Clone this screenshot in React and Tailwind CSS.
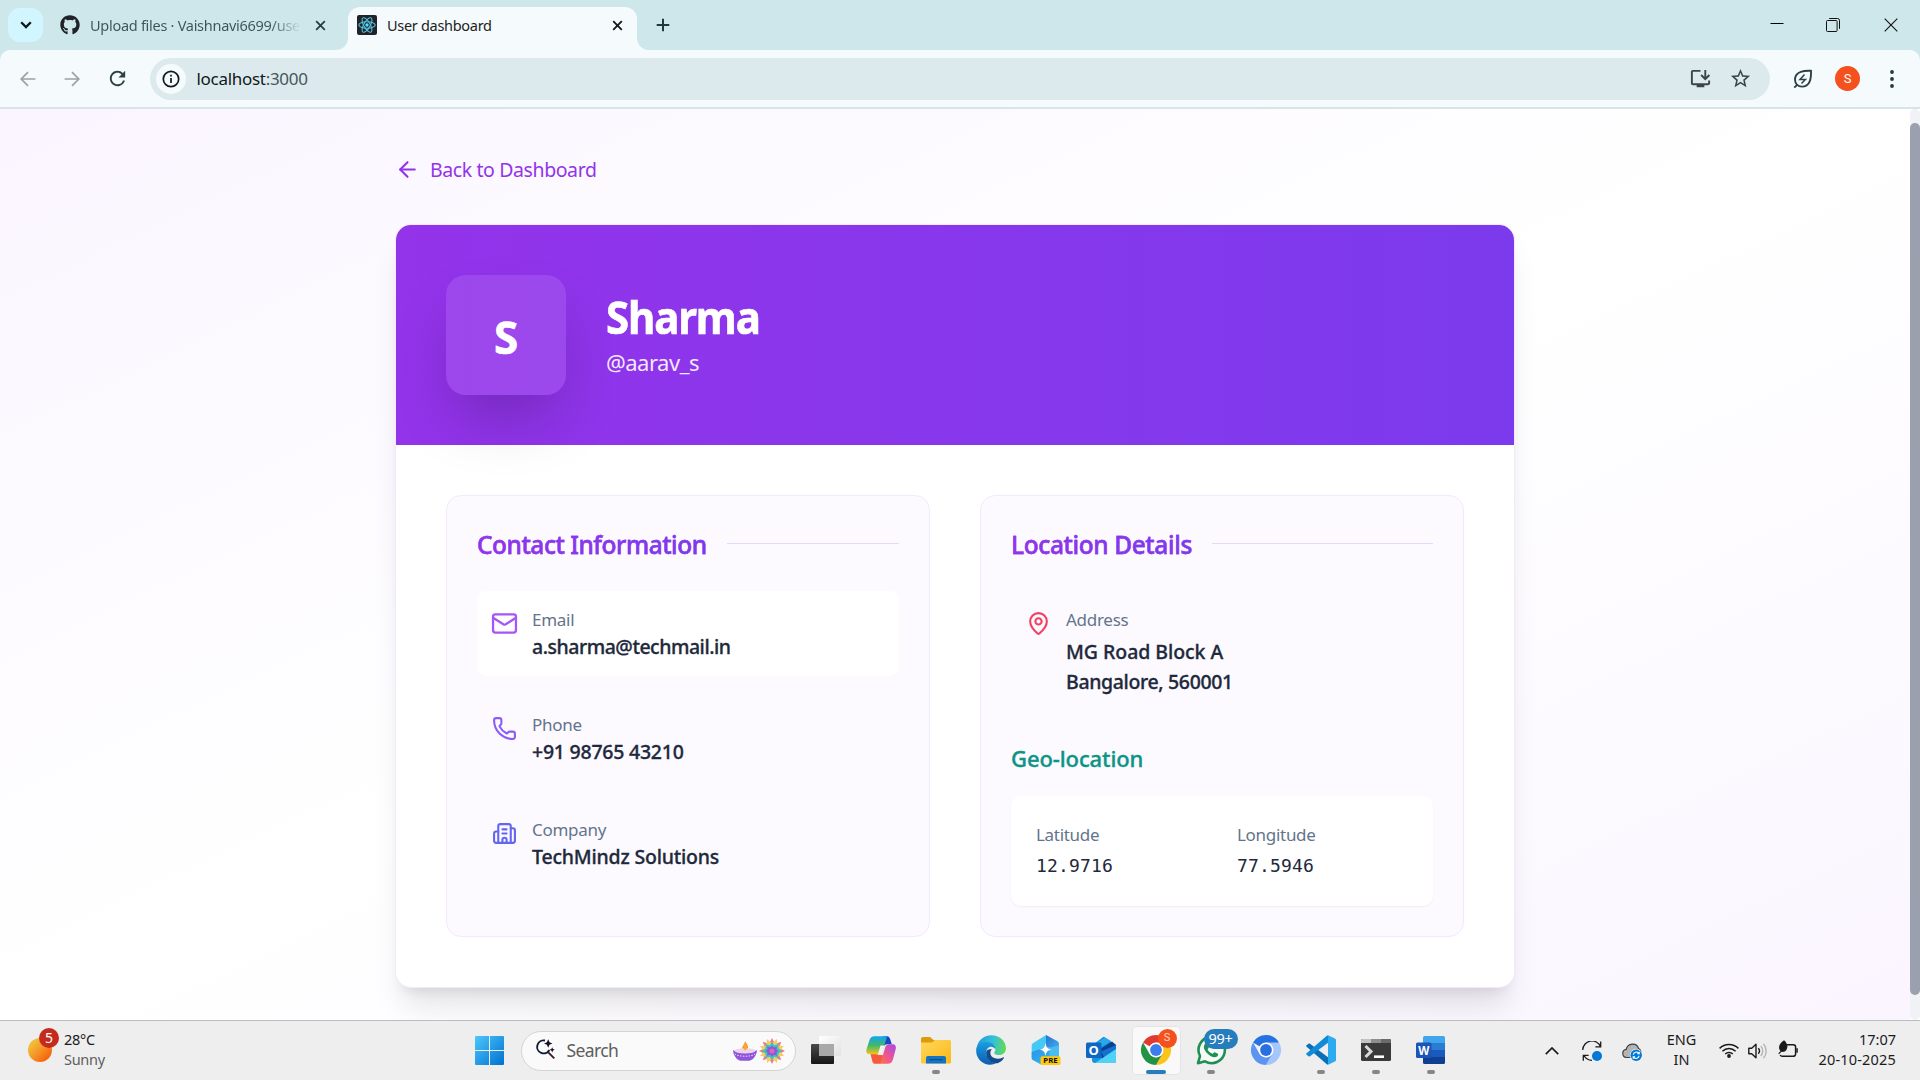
import React from "react";
import { ArrowLeft, Mail, Phone, MapPin } from "lucide-react";
import { FaGithub } from "react-icons/fa";
import { MdOutlineStarBorder, MdOutlineInstallDesktop, MdRefresh } from "react-icons/md";

/* ---------- browser chrome ---------- */

function CloseX({ className }) {
  return (
    <svg viewBox="0 0 12 12" className={className} fill="none" stroke="currentColor" strokeWidth="2">
      <path d="M1.3 1.3 10.7 10.7M10.7 1.3 1.3 10.7" />
    </svg>
  );
}

function ReactLogo() {
  return (
    <svg viewBox="0 0 20 20" className="size-5 shrink-0">
      <rect width="20" height="20" rx="2" fill="#20232a" />
      <g fill="none" stroke="#53c1de" strokeWidth="1.1">
        <ellipse cx="10" cy="10" rx="8.2" ry="3.2" />
        <ellipse cx="10" cy="10" rx="8.2" ry="3.2" transform="rotate(60 10 10)" />
        <ellipse cx="10" cy="10" rx="8.2" ry="3.2" transform="rotate(120 10 10)" />
      </g>
      <circle cx="10" cy="10" r="1.7" fill="#61dafb" />
    </svg>
  );
}

function TabStrip() {
  return (
    <div className="flex h-[50px] bg-[#cee7eb] text-[14.5px]">
      <div className="ml-2 mt-2 flex h-[34px] w-[35px] items-center justify-center rounded-[12px] bg-[#d1f6ff]">
        <svg viewBox="0 0 12 8" className="h-2 w-3" fill="none" stroke="#10191b" strokeWidth="2.3">
          <path d="M1.2 1.3 6 6.1l4.8-4.8" />
        </svg>
      </div>
      <div className="ml-[17px] flex w-[276px] items-center">
        <FaGithub className="size-5 shrink-0 text-[#1f2328]" />
        <div className="ml-2.5 w-[211px] shrink-0 overflow-hidden pt-px whitespace-nowrap bg-linear-to-r from-[#3d5357] from-85% to-[#cee7eb] bg-clip-text tracking-[-0.28px] text-transparent">
          Upload files · Vaishnavi6699/use
        </div>
        <CloseX className="ml-[13.500px] size-[11px] shrink-0 text-[#2b3f43]" />
      </div>
      <div className="flex w-3 items-end bg-[#f5fafc]">
        <div className="h-full w-full rounded-br-[12px] bg-[#cee7eb]" />
      </div>
      <div className="mt-[7px] flex w-[289px] items-center rounded-t-[12px] bg-[#f5fafc] pb-[7px] pl-[9px]">
        <ReactLogo />
        <div className="ml-2.5 w-[224px] pt-px tracking-[-0.3px] text-[#1b2224]">User dashboard</div>
        <CloseX className="ml-px size-[11px] text-[#10191b]" />
      </div>
      <div className="flex grow bg-[#f5fafc]">
        <div className="flex grow items-center rounded-bl-[12px] bg-[#cee7eb] pl-[19px]">
          <svg viewBox="0 0 14 14" className="size-3.5" stroke="#23393d" strokeWidth="2">
            <path d="M7 .7v12.6M.7 7h12.6" />
          </svg>
          <svg viewBox="0 0 14 14" className="ml-auto size-3.5" fill="none" stroke="#000">
            <path d="M.5 5.5h13" />
          </svg>
          <svg viewBox="0 0 14 14" className="ml-[42px] size-3.5" fill="none" stroke="#111">
            <rect x=".5" y="2.5" width="10.6" height="11" rx="1" />
            <path d="M3.2.5h8.3a2 2 0 0 1 2 2v8.3" />
          </svg>
          <svg viewBox="0 0 14 14" className="ml-[44px] mr-[22px] size-3.5" fill="none" stroke="#111" strokeWidth="1.1">
            <path d="M.7.7l12.6 12.6M13.3.7.7 13.3" />
          </svg>
        </div>
      </div>
    </div>
  );
}

function Toolbar() {
  return (
    <div className="bg-[#cee7eb]">
      <div className="flex h-[59px] items-center rounded-t-[10px] border-b-2 border-[#d9e4e9] bg-[#f5fafc]">
        <svg viewBox="0 0 16 16" className="ml-5 size-4 text-[#9ba3a6]" fill="none" stroke="currentColor" strokeWidth="1.7">
          <path d="M15.4 8H1.6M8 1.2 1.2 8 8 14.8" />
        </svg>
        <svg viewBox="0 0 16 16" className="ml-7 size-4 text-[#9ba3a6]" fill="none" stroke="currentColor" strokeWidth="1.7">
          <path d="M.6 8h13.8M8 1.2 14.8 8 8 14.8" />
        </svg>
        <MdRefresh className="ml-[26px] size-[23px] text-[#2c4146]" />
        <div className="ml-[21px] flex h-[42px] w-[1620px] items-center rounded-full bg-[#dceaee] pl-1.5">
          <div className="flex size-[30px] items-center justify-center rounded-full bg-[#f5fafc]">
            <svg viewBox="0 0 18 18" className="size-[18px]" fill="none" stroke="#10191b" strokeWidth="1.7">
              <circle cx="9" cy="9" r="7.7" />
              <path d="M9 8v5M9 4.800v1.800" />
            </svg>
          </div>
          <div className="ml-[10.500px] pt-px text-[17px] tracking-[-0.3px] text-[#10191b]">
            localhost<span className="text-[#45565a]">:3000</span>
          </div>
          <MdOutlineInstallDesktop className="ml-auto size-[23px] text-[#3d4447]" />
          <MdOutlineStarBorder className="ml-[17px] mr-[18px] size-[23px] text-[#3d4447]" />
        </div>
        <svg viewBox="0 0 20 20" className="ml-[22.500px] size-5" fill="none" stroke="#2c4146" strokeWidth="1.9">
          <path d="M18 1.800C12 1.500 2 2 2 10.600c0 4.200 3 7 7 7 8 0 9.300-8 9-15.800Z" />
          <path d="M1.300 18.600 4.600 15.300" />
          <path d="M11.500 5.500 7 10.500h5.400L8.500 14.500" strokeWidth="1.5" />
        </svg>
        <div className="ml-[22.500px] flex size-[25px] items-center justify-center rounded-full bg-[#f4511e] font-[Roboto] text-[13px] text-white">S</div>
        <svg viewBox="0 0 4 18" className="ml-[30px] h-[18px] w-1" fill="#23393d">
          <circle cx="2" cy="2" r="1.900" />
          <circle cx="2" cy="9" r="1.900" />
          <circle cx="2" cy="16" r="1.900" />
        </svg>
      </div>
    </div>
  );
}

/* ---------- page ---------- */

function BuildingIcon({ className }) {
  return (
    <svg viewBox="0 0 24 24" className={className} fill="none" stroke="currentColor" strokeWidth="2" strokeLinecap="round" strokeLinejoin="round">
      <path d="M10 12h4M10 8h4M14 21v-3a2 2 0 0 0-4 0v3" />
      <path d="M6 10H4a2 2 0 0 0-2 2v7a2 2 0 0 0 2 2h16a2 2 0 0 0 2-2V9a2 2 0 0 0-2-2h-2" />
      <path d="M6 21V5a2 2 0 0 1 2-2h8a2 2 0 0 1 2 2v16" />
    </svg>
  );
}

function Panel({ title, children }) {
  return (
    <section className="w-[484px] rounded-[15px] border border-[#f3e8ff] bg-[#fcfaff] p-[30px]">
      <div className="mb-[30px] flex h-[35px] items-center gap-5">
        {title}
        <div className="h-px grow bg-[#e5d8fd]" />
      </div>
      {children}
    </section>
  );
}

function InfoRow({ icon, label, className, children }) {
  return (
    <div className={"flex gap-[15px] rounded-[10px] p-[15px] " + className}>
      <div className="mt-[5px]">{icon}</div>
      <div className="-mb-px pt-px">
        <div className="text-[17px] leading-[25px] tracking-[-0.28px] text-[#64748b]">{label}</div>
        {children}
      </div>
    </div>
  );
}

const heading =
  "mt-0.5 w-fit whitespace-nowrap bg-linear-to-r from-[#9333ea] to-[#7c3aed] bg-clip-text text-[24.5px] leading-[35px] font-medium text-transparent [-webkit-text-stroke:0.4px_#8837eb]";
const value = "whitespace-nowrap text-[19.5px] leading-[30px] font-medium text-[#1e293b] [-webkit-text-stroke:0.3px_#1e293b]";

function ProfilePage() {
  return (
    <main className="h-[911px] grow overflow-hidden bg-linear-to-br from-[#faf5ff] via-white to-[#faf5ff] pl-[394.500px] pt-[45px]">
      <a className="flex h-[31px] w-fit items-center gap-[10.500px] text-[#9333ea]">
        <ArrowLeft className="size-[25px]" strokeWidth={2} />
        <span className="pt-px text-[19.5px] tracking-[-0.4px]">Back to Dashboard</span>
      </a>
      <article className="mt-10 ml-[1.500px] w-[1118px] rounded-[15px] bg-white shadow-[0_25px_31px_-6px_rgba(0,0,0,0.1),0_10px_12.5px_-7.5px_rgba(0,0,0,0.1)] ring-1 ring-[#f3e8ff]">
        <header className="flex h-[220px] items-center rounded-t-[15px] bg-linear-to-r from-[#9333ea] to-[#7c3aed] pl-[50px] text-white">
          <div className="flex size-[120px] items-center justify-center rounded-[20px] bg-white/10 pt-[3px] text-[44px] font-bold shadow-[0_31px_62px_-15px_rgba(0,0,0,0.25)]">
            <span className="[-webkit-text-stroke:0.6px_white]">S</span>
          </div>
          <div className="ml-10">
            <h1 className="h-[51px] origin-left scale-x-[0.944] pt-px text-[44.5px] leading-[50px] font-bold tracking-[-1.2px] [-webkit-text-stroke:0.6px_white]">Sharma</h1>
            <div className="mt-[3px] h-[35px] text-[22px] leading-[35px] tracking-[-0.5px] text-[#f3e8ff]">@aarav_s</div>
          </div>
        </header>
        <div className="flex gap-[50px] p-[50px]">
          <Panel title={<h2 className={heading + " tracking-[-0.48px]"}>Contact Information</h2>}>
            <div className="flex flex-col gap-5">
              <InfoRow label="Email" className="bg-white" icon={<Mail className="size-[25px] scale-110 text-[#a855f7]" />}>
                <div className={value + " tracking-[-0.48px]"}>a.sharma@techmail.in</div>
              </InfoRow>
              <InfoRow label="Phone" className="" icon={<Phone className="size-[25px] text-[#8b5cf6]" />}>
                <div className={value + " tracking-[-0.24px]"}>+91 98765 43210</div>
              </InfoRow>
              <InfoRow label="Company" className="" icon={<BuildingIcon className="size-[25px] text-[#6366f1]" />}>
                <div className={value + " tracking-[-0.2px]"}>TechMindz Solutions</div>
              </InfoRow>
            </div>
          </Panel>
          <Panel title={<h2 className={heading + " tracking-[-0.4px]"}>Location Details</h2>}>
            <InfoRow label="Address" className="" icon={<MapPin className="size-[25px] text-[#f43f5e]" />}>
              <div className={value + " mt-[5px] tracking-[-0.05px]"}>MG Road Block A</div>
              <div className={value + " tracking-[-0.36px]"}>Bangalore, 560001</div>
            </InfoRow>
            <h3 className="mt-[30px] mb-5 h-[35px] text-[22px] leading-[35px] font-medium tracking-[-0.1px] text-[#0d9488] [-webkit-text-stroke:0.35px_#0d9488]">
              Geo-location
            </h3>
            <div className="grid h-[110px] grid-cols-2 gap-x-[30px] rounded-[10px] bg-white p-[25px] pt-[26px] shadow-[0_1px_2px_rgba(0,0,0,0.05)]">
              {[
                ["Latitude", "12.9716"],
                ["Longitude", "77.5946"],
              ].map(([name, n]) => (
                <div key={name}>
                  <div className="text-[17px] leading-[25px] tracking-[-0.3px] text-[#64748b]">{name}</div>
                  <div className="mt-[5px] font-['DejaVu_Sans_Mono',monospace] text-[18px] leading-[28px] tracking-[0.16px] text-[#1e293b]">{n}</div>
                </div>
              ))}
            </div>
          </Panel>
        </div>
      </article>
    </main>
  );
}

/* ---------- taskbar icons, each on a 30 × 30 grid ---------- */

function Art({ children }) {
  return (
    <svg viewBox="0 0 30 30" className="size-[30px] overflow-visible">
      {children}
    </svg>
  );
}

function Grad({ id, from, to, x2 = 1, y2 = 1 }) {
  return (
    <linearGradient id={id} x1="0" y1="0" x2={x2} y2={y2}>
      <stop offset="0" stopColor={from} />
      <stop offset="1" stopColor={to} />
    </linearGradient>
  );
}

function TaskViewIcon() {
  return (
    <Art>
      <Grad id="tvd" from="#4a4a4a" to="#161616" y2={1} x2={0} />
      <Grad id="tvl" from="#ffffff" to="#e2e2e2" />
      <rect x="0" y="9" width="23" height="20" rx="1" fill="url(#tvd)" />
      <rect x="8" y="1" width="22" height="20" rx="1" fill="url(#tvl)" />
      <rect x="8" y="9" width="15" height="12" fill="#a9a9a9" />
    </Art>
  );
}

function CopilotIcon() {
  return (
    <Art>
      <linearGradient id="cpA" x1="0" y1="0" x2="0" y2="1">
        <stop offset="0" stopColor="#12a5f5" />
        <stop offset=".5" stopColor="#3fb86b" />
        <stop offset="1" stopColor="#f2c51a" />
      </linearGradient>
      <linearGradient id="cpB" x1="0" y1="1" x2="1" y2="0">
        <stop offset="0" stopColor="#ff7a3d" />
        <stop offset=".45" stopColor="#f0568f" />
        <stop offset="1" stopColor="#a348e8" />
      </linearGradient>
      <path d="M17 1.200h4c2 0 2.700 1.500 3.200 3l1.600 5h-4.500c-2 0-3 .8-3.600 2.800Z" fill="#1746c8" />
      <path d="M8.500 28.800h5c2 0 3-1.200 3.600-3.200l1.300-5-9-1.600H4.500l1.700 6.800c.5 2 1.200 3 2.300 3Z" fill="#f55a3c" />
      <path d="M8.500 1.200h10.700c2 0 1.500 1.800 1 3.300l-3.600 11.300c-.8 2.600-2 3.400-4.300 3.400H4c-3 0-4.300-1.800-3.400-5.200L3.500 5c.8-2.500 2.300-3.800 5-3.800Z" fill="url(#cpA)" />
      <path d="M21.500 28.800H12c2-.4 2.800-1.600 3.400-3.400L19 13c.8-2.600 2-3.800 4.300-3.800h3c3 0 4.200 2 3.300 5.300L27 24.300c-.8 3-2.500 4.500-5.500 4.500Z" fill="url(#cpB)" />
      <path d="M14.500 10.500h4l-2.700 9.300h-4Z" fill="#f4f1f5" />
    </Art>
  );
}

function FolderIcon() {
  return (
    <Art>
      <Grad id="fol" from="#ffd75e" to="#fbb914" />
      <path d="M0 4a2 2 0 0 1 2-2h7l3.500 3H29v8H0Z" fill="#dd9a09" />
      <path d="M0 7.500h11L14 5h14.500A1.500 1.500 0 0 1 30 6.500V27a1.500 1.500 0 0 1-1.500 1.500h-27A1.500 1.500 0 0 1 0 27Z" fill="url(#fol)" />
      <path d="M5 28.500V23a2 2 0 0 1 2-2h16a2 2 0 0 1 2 2v5.500Z" fill="#1374c5" />
      <path d="M8.500 24.600h13" stroke="#0b4f8e" strokeWidth="1.200" />
    </Art>
  );
}

function EdgeIcon() {
  return (
    <Art>
      <linearGradient id="edA" x1="0" y1=".4" x2="1" y2=".5">
        <stop offset="0" stopColor="#1f9be0" />
        <stop offset=".55" stopColor="#35c1d8" />
        <stop offset="1" stopColor="#62dc4f" />
      </linearGradient>
      <Grad id="edB" from="#1b9de2" to="#0c5cb0" x2={0} />
      <path d="M1 11C3 4.500 8.500.3 15.300.3 23.600.3 30 6.200 30 13.300c0 4-3.100 6.800-6.900 6.800-2.900 0-4.900-1-4.900-2.200 0-.8 1.200-1.400 1.200-3.600 0-3-3.300-5.600-7.500-5.600Z" fill="url(#edA)" />
      <path d="M.2 14C.8 9.500 5.500 6.800 10.700 7c4.800.2 8.700 3 8.700 7.300-1-1.600-2.500-2.500-4.300-2.500-2.800 0-4.900 2.400-4.900 6 0 6 4.800 10 9.800 10.300-1.500 1-3.500 1.700-5.700 1.700C6 29.800-.7 22.800.2 14Z" fill="url(#edB)" />
      <path d="M10.200 17c-.8 7 5.300 12 11.400 11.200 2.700-1 5-3 6.200-5 .4-.8-.2-1.200-.9-.8-5.500 2.800-12.300.6-12.500-4.200-.1-1.800.7-3 1.600-3.600-2.700-.7-5.500.2-5.800 2.400Z" fill="#124c8c" />
    </Art>
  );
}

function CopilotAppIcon() {
  return (
    <Art>
      <Grad id="m3a" from="#2b8fe4" to="#35c3f3" />
      <Grad id="m3b" from="#2a6fd6" to="#3fb4ee" />
      <path d="M15 0 26.500 6.200A3 3 0 0 1 28 9v6L15 12Z" fill="url(#m3b)" />
      <path d="M1.500 8.500 15 0v12L7 20 .7 23V10.500a2.500 2.500 0 0 1 .8-2Z" fill="#45c9f4" />
      <path d="M.7 17 15 12l13 3v8.500L18 29.500H10L1.700 25a2 2 0 0 1-1-1.800Z" fill="url(#m3a)" />
      <path d="M18 13 28 10.500V23l-9 3Z" fill="#4bbcf0" />
      <path d="M14.500 8c.8 4.600 2 5.800 6.300 6.600-4.300.8-5.500 2-6.300 6.600-.8-4.600-2-5.800-6.300-6.600 4.300-.8 5.500-2 6.300-6.600Z" fill="#fff" />
      <rect x="9.500" y="21.300" width="20" height="8.700" rx="1.800" fill="#ffc90e" />
      <text x="19.500" y="28.300" textAnchor="middle" className="font-['Noto_Sans'] text-[7.800px] font-bold" fill="#111">PRE</text>
    </Art>
  );
}

function OutlookIcon() {
  return (
    <Art>
      <path d="M6 10.500 16.500 2.500c.8-.6 1.700-.6 2.500 0L30 10v16a2 2 0 0 1-2 2H9a3 3 0 0 1-3-3Z" fill="#1493df" />
      <path d="M9 9.500 19 2.400 25 6 12 14Z" fill="#28a8ea" />
      <path d="M14 14 26 6.500l4 3.500v6L16 24Z" fill="#0a3f94" />
      <path d="M15 16.500 30 10v5L18 22Z" fill="#1272cc" />
      <path d="M30 14v12a2 2 0 0 1-2 2H9Z" fill="#50d1f8" />
      <rect x="0" y="7.500" width="15.500" height="15.500" rx="1.500" fill="#0f67c4" />
      <text x="7.700" y="20" textAnchor="middle" className="font-['Noto_Sans'] text-[13px] font-bold" fill="#fff">O</text>
    </Art>
  );
}

function ChromeIcon({ r, g, y, c }) {
  return (
    <Art>
      <path d="M15 15 2 7.500A15 15 0 0 1 28 7.500Z" fill={r} />
      <path d="M15 15V7.500h13A15 15 0 0 1 15 30l6.500-11.200Z" fill={y} />
      <path d="M2 7.500 8.500 18.750 15 22.500l6.500-3.750L15 30A15 15 0 0 1 2 7.500Z" fill={g} />
      <circle cx="15" cy="15" r="7.500" fill="#fff" />
      <circle cx="15" cy="15" r="5.900" fill={c} />
    </Art>
  );
}

function WhatsAppIcon() {
  return (
    <Art>
      <path d="M2 28.200 4 21A13.200 13.200 0 1 1 9 26.300Z" fill="#f6faf7" stroke="#1f8f55" strokeWidth="2.600" strokeLinejoin="round" />
      <path d="M8.500 9.500c1-1.800 2.800-1.500 3.300 0l1 2.400c.3 1-.9 1.800-1.200 2.500 1 2 2.700 3.500 4.900 4.400.8-.4 1.400-1.900 2.300-1.600l2.700 1.300c1.300.7.600 2.500-.8 3.300-5 2.200-12.800-5-12.900-10Z" fill="#1f8f55" />
    </Art>
  );
}

function VSCodeIcon() {
  return (
    <Art>
      <path d="M.6 10.300 2.500 8.700c.5-.3 1-.3 1.500 0L22 22.300v7.200a2 2 0 0 1-1.500-.6L.6 11.700c-.6-.4-.6-1 0-1.400Z" fill="#0a6fb8" />
      <path d="M.6 19.700 2.500 21.300c.5.3 1 .3 1.500 0L22 7.700V.500a2 2 0 0 0-1.500.6L.6 18.300c-.6.4-.6 1 0 1.400Z" fill="#118bd8" />
      <path d="M22 .200 29 3.500c.6.300 1 .9 1 1.600v19.800c0 .7-.4 1.300-1 1.600L22 29.800c-.8.3-1.600 0-2-.4.900.7 2 .2 2-.9V1.500c0-1.100-1.100-1.600-2-.9.400-.4 1.200-.8 2-.4Z" fill="#2cabf0" />
    </Art>
  );
}

function TerminalIcon() {
  return (
    <Art>
      <rect x="0" y="4" width="30" height="22" rx="1.500" fill="#3a3a3a" />
      <path d="M0 8V5.500A1.500 1.500 0 0 1 1.500 4H10v4Z" fill="#c4c4c4" />
      <path d="M10 4h10v4H10Z" fill="#8e8e8e" />
      <path d="M20 4h8.500A1.500 1.500 0 0 1 30 5.500V8H20Z" fill="#6a6a6a" />
      <path d="m4.500 11 5.500 5.500L4.500 22" fill="none" stroke="#d9d9d9" strokeWidth="3" />
      <path d="M13 21.700h10" stroke="#fff" strokeWidth="2.600" />
    </Art>
  );
}

function WordIcon() {
  return (
    <Art>
      <path d="M7 9V2.500A1.500 1.500 0 0 1 8.500 1h19A1.500 1.500 0 0 1 29 2.500V8Z" fill="#41a5ee" />
      <path d="M7 8h22v7H7Z" fill="#2b7cd3" />
      <path d="M7 15h22v7H7Z" fill="#185abd" />
      <path d="M7 22h22v5.500a1.500 1.500 0 0 1-1.500 1.500h-19A1.500 1.500 0 0 1 7 27.500Z" fill="#103f91" />
      <rect x="0" y="7.500" width="15.500" height="15.500" rx="1.500" fill="#1a56b8" />
      <text x="7.700" y="19.700" textAnchor="middle" className="font-['Noto_Sans'] text-[11.500px] font-bold" fill="#fff">W</text>
    </Art>
  );
}

const apps = [
  { id: "taskview", icon: <TaskViewIcon /> },
  { id: "copilot", icon: <CopilotIcon /> },
  { id: "explorer", icon: <FolderIcon />, running: true },
  { id: "edge", icon: <EdgeIcon /> },
  { id: "m365", icon: <CopilotAppIcon /> },
  { id: "outlook", icon: <OutlookIcon /> },
  { id: "chrome", icon: <ChromeIcon r="#e13b2f" g="#229244" y="#fcc419" c="#3b7ded" />, active: true },
  { id: "whatsapp", icon: <WhatsAppIcon />, running: true, count: "99+" },
  { id: "chromium", icon: <ChromeIcon r="#2672e3" g="#5b94f2" y="#a5c6fb" c="#2a6fe0" /> },
  { id: "vscode", icon: <VSCodeIcon />, running: true },
  { id: "terminal", icon: <TerminalIcon />, running: true },
  { id: "word", icon: <WordIcon />, running: true },
];

function AppButton({ app }) {
  return (
    <div className="flex h-[59px] w-[55px] items-center justify-center">
      <div
        className={
          "relative flex h-[49px] w-[49px] flex-col items-center rounded-[5px] pt-[9px] " +
          (app.active ? "bg-[#f9f9f9] ring-1 ring-[#e4e4e4] ring-inset" : "")
        }
      >
        {app.icon}
        {app.running && <div className="mt-[5px] h-1 w-2 rounded-full bg-[#868686]" />}
        {app.active && <div className="mt-[5px] h-1 w-5 rounded-full bg-[#267dbe]" />}
        {app.active && (
          <div className="absolute top-[3px] left-[26px] flex size-[19px] items-center justify-center rounded-full bg-[#f4511e] font-[Roboto] text-[11px] text-[#ffd5c8]">S</div>
        )}
        {app.count && (
          <div className="absolute top-[3px] left-[17px] flex h-5 w-[34px] items-center justify-center rounded-full bg-[#267dbe] pb-0.5 text-[14.5px] leading-[18px] tracking-[-0.29px] text-white">
            {app.count}
          </div>
        )}
      </div>
    </div>
  );
}

function Festive() {
  const ray = "M13 0 16 6h-6Z";
  return (
    <>
      <svg viewBox="0 0 24 20" className="h-5 w-6">
        <path d="M12 .3c3 3.500 3.600 6 2.600 8.200-1 2-4.200 2-5.200 0C8.400 6.300 11 4.500 12 .3Z" fill="#f7941d" />
        <path d="M0 9c3 3 21 3 24 0-.3 6-4.500 10.700-8 10.700H8C4.500 19.700.3 15 0 9Z" fill="#9154dc" />
        <ellipse cx="12" cy="9.800" rx="10.500" ry="2.600" fill="#ecd3e8" />
        <path d="M12.200 1.500c2 3 2.300 6.500.2 8-2.300-1.200-2.200-4.500-.2-8Z" fill="#f9a63a" />
        <path d="M1.800 13c4 3 16.400 3 20.400 0" fill="none" stroke="#e9d3ff" strokeDasharray="1.500 1.300" />
      </svg>
      <svg viewBox="0 0 26 26" className="ml-[2px] size-[26px]">
        {[0, 45, 90, 135, 180, 225, 270, 315].map((a) => (
          <path key={a} d={ray} fill="#f0788c" transform={`rotate(${a} 13 13)`} />
        ))}
        {[22, 67, 112, 157, 202, 247, 292, 337].map((a) => (
          <path key={a} d={ray} fill="#f9cb5d" transform={`rotate(${a} 13 13)`} />
        ))}
        <path d="m13 4 2.500 3 3.800-.7.200 4 3.500 2.700-3.500 2.700-.2 4-3.800-.7L13 22l-2.500-3-3.800.7-.2-4L3 13l3.500-2.700.2-4 3.800.7Z" fill="#3fc3bd" />
        <path d="m13 7.500 1.800 2 3-.8-.3 3L19.500 13l-2 1.500.3 3-3-.8-1.800 2-1.800-2-3 .8.300-3-2-1.500 2-1.500-.3-3 3 .8Z" fill="#8f56d8" />
        <circle cx="13" cy="13" r="2.500" fill="#d765c4" />
      </svg>
    </>
  );
}

function SearchBox() {
  return (
    <div className="ml-[17px] flex h-10 w-[275px] items-center rounded-full border border-[#d4d4d4] bg-[#fafafa] pl-[12.500px]">
      <svg viewBox="0 0 20 20" className="mt-[-3px] size-5" fill="none" stroke="#0c1a33" strokeWidth="1.900">
        <path d="M10 1.500a6.500 6.500 0 1 0 4.400 9.500" />
        <path d="m13.300 13.300 6 6" stroke="#3a1530" />
        <path d="M13.200.3 14.500 3.200l2.900 1.300-2.900 1.300-1.300 2.900-1.300-2.900L9 4.500l2.900-1.300ZM17.200 8.200l.8 1.800 1.800.8-1.800.8-.8 1.800-.8-1.800-1.800-.8 1.800-.8Z" fill="#160f2c" stroke="none" />
      </svg>
      <span className="ml-[12px] text-[17.500px] tracking-[-0.6px] text-[#5e5e5e]">Search</span>
      <div className="mr-[10px] ml-auto flex items-center">
        <Festive />
      </div>
    </div>
  );
}

function Tray() {
  return (
    <div className="ml-auto flex h-[59px] items-center text-[14.500px] leading-5 text-[#1b1b1b]">
      <svg viewBox="0 0 14 8" className="h-2 w-3.5" fill="none" stroke="#1b1b1b" strokeWidth="1.700">
        <path d="M.8 7.200 7 1l6.200 6.200" />
      </svg>
      <svg viewBox="0 0 20 20" className="ml-[23px] size-5" fill="none" stroke="#1b1b1b" strokeWidth="1.300">
        <path d="M.7 9A9.300 9.300 0 0 1 18.500 5.500M18.700.5v5.300h-5.300M10 19.300a9 9 0 0 1-8-4.800M1.300 19.700v-5.400h5.300" />
        <circle cx="15" cy="15" r="5" fill="#0078d7" stroke="none" />
      </svg>
      <svg viewBox="0 0 21 18" className="ml-[20px] mt-0.5 h-[18px] w-[21px]">
        <path d="M4.500 14.500C-.5 14-.3 7 4.200 6.400 5.500-.3 15-.8 16.500 5.500c2 .6 2.500 3 2.300 5L12 14.500Z" fill="#b4b4b4" stroke="#3f3f3f" strokeWidth="1.200" />
        <circle cx="14.200" cy="12.200" r="6.400" fill="#eee" />
        <circle cx="14.200" cy="12.200" r="5.700" fill="#0078d7" />
        <path d="M11.300 11.700a3 3 0 0 1 5.300-1.500M17.200 8.700v2h-2M17.100 12.800a3 3 0 0 1-5.300 1.500M11.200 15.700v-2h2" fill="none" stroke="#fff" strokeWidth="1.100" />
      </svg>
      <div className="ml-[23.500px] w-[30px] pb-[3px] text-center whitespace-nowrap">
        <div>ENG</div>
        <div>IN</div>
      </div>
      <svg viewBox="0 0 20 15" className="ml-[22px] h-[15px] w-5" fill="none" stroke="#1b1b1b" strokeWidth="1.500">
        <path d="M.6 5.400a13.300 13.300 0 0 1 18.800 0M3.400 8.200a9.300 9.300 0 0 1 13.200 0M6.200 11a5.400 5.400 0 0 1 7.600 0" />
        <circle cx="10" cy="13" r="1.900" fill="#1b1b1b" stroke="none" />
      </svg>
      <svg viewBox="0 0 20 18" className="ml-[9.500px] h-[18px] w-5" fill="none" stroke="#1b1b1b" strokeWidth="1.400">
        <path d="M.8 6.300h2.900L8 2.300v13.400l-4.300-4H.8Z" strokeLinejoin="round" />
        <path d="M10.300 6.300a4 4 0 0 1 0 5.400" />
        <path d="M12.800 4a7.500 7.500 0 0 1 0 10M15.400 1.700a11 11 0 0 1 0 14.600" stroke="#b5b5b5" />
      </svg>
      <svg viewBox="0 0 20 18" className="ml-[10px] mt-[-3px] h-[18px] w-5">
        <path d="M9 4.700h6.300a2.300 2.300 0 0 1 2.300 2.300v7a2.300 2.300 0 0 1-2.300 2.300H4.500A2.300 2.300 0 0 1 2.200 15" fill="none" stroke="#1b1b1b" strokeWidth="1.500" />
        <path d="M18.300 8.300h1.500v4.400h-1.500Z" fill="#1b1b1b" />
        <path d="M6 .3c3 2.500 4.500 6 2.500 9.500-1 2-3.500 2.300-5 2L1 14.300l-.7-.8L2.500 11C-.3 8 1 3.500 6 .3Z" fill="#1b1b1b" />
      </svg>
      <div className="ml-[18px] w-[80px] pb-[3px] text-right whitespace-nowrap">
        <div>17:07</div>
        <div className="tracking-[0.18px]">20-10-2025</div>
      </div>
    </div>
  );
}

function Taskbar() {
  return (
    <footer className="flex h-[60px] items-center border-t border-[#bcbcc0] bg-[#eeeeee] pr-[24px]">
      <div className="relative -mt-px ml-7 size-[24px] rounded-full bg-linear-to-br from-[#f0bd3a] from-20% to-[#f4690e] to-80%">
        <div className="absolute -top-[10px] left-[11px] flex size-5 items-center justify-center rounded-full bg-[#c42b1c] pb-px text-[14px] leading-[19px] text-white">5</div>
      </div>
      <div className="ml-3 w-[399px] pb-[4px] text-[14.500px] leading-5 tracking-[-0.3px]">
        <div className="text-[#1b1b1b]">28°C</div>
        <div className="text-[#5e5e5e]">Sunny</div>
      </div>
      <svg viewBox="0 0 29 29" className="ml-3 size-[29px]">
        <Grad id="win" from="#4cc8fb" to="#0070d0" />
        <path d="M1 0h13v14H0V1a1 1 0 0 1 1-1ZM15 0h13a1 1 0 0 1 1 1v13H15ZM0 15h14v14H1a1 1 0 0 1-1-1ZM15 15h14v13a1 1 0 0 1-1 1H15Z" fill="url(#win)" />
      </svg>
      <SearchBox />
      <nav className="ml-[2.500px] flex">
        {apps.map((a) => (
          <AppButton key={a.id} app={a} />
        ))}
      </nav>
      <Tray />
    </footer>
  );
}

export default function App() {
  return (
    <div className="flex h-[1080px] w-[1920px] flex-col overflow-hidden bg-white font-['Noto_Sans',sans-serif]">
      <TabStrip />
      <Toolbar />
      <div className="flex h-[911px]">
        <ProfilePage />
        <div className="w-2.5 shrink-0 rounded-full bg-[#f1f2f5] pt-3.5">
          <div className="h-[872px] rounded-full bg-[#9ba0af]" />
        </div>
      </div>
      <Taskbar />
    </div>
  );
}
